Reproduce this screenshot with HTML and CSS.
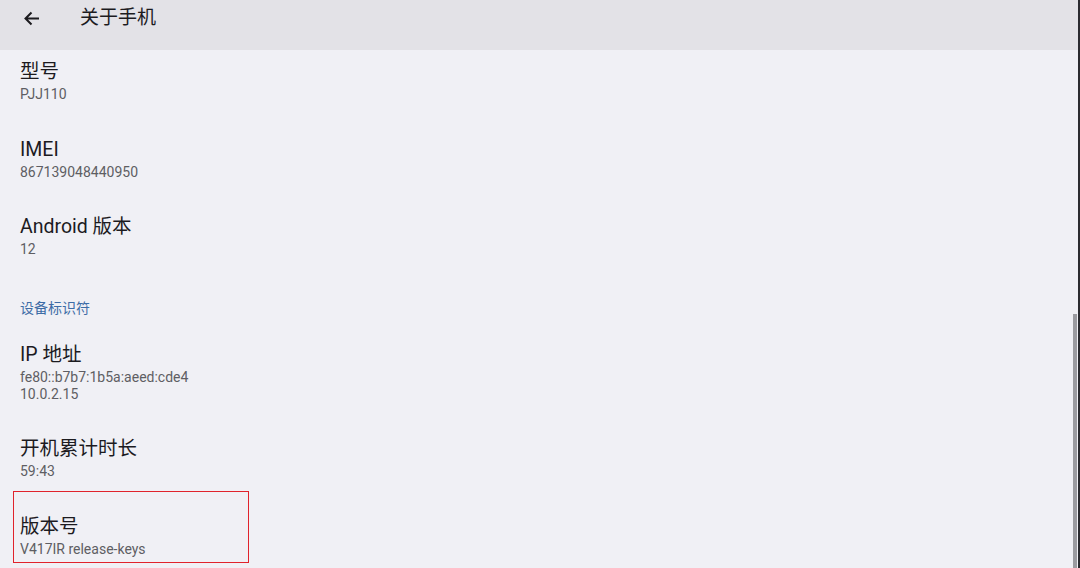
FILE: index.html
```html
<!DOCTYPE html>
<html>
<head>
    <title>关于手机</title>
    <link rel="stylesheet" href="styles.css">
</head>
<body>
    <div class="screen">
        <div class="app">
            <div class="toolbar">
                <span class="back">
                    <svg width="17" height="15" viewBox="0 0 17 15"><path d="M16 7.5H2.5M8.5 1.5l-6 6 6 6" fill="none" stroke="#1c1b1f" stroke-width="2"/></svg>
                </span>
                <span class="toolbar-title">关于手机</span>
            </div>
            <ul class="pref-list">
                <li class="pref first">
                    <div class="pref-title">型号</div>
                    <div class="pref-summary">PJJ110</div>
                </li>
                <li class="pref">
                    <div class="pref-title">IMEI</div>
                    <div class="pref-summary">867139048440950</div>
                </li>
                <li class="pref">
                    <div class="pref-title">Android 版本</div>
                    <div class="pref-summary">12</div>
                </li>
                <li class="category">设备标识符</li>
                <li class="pref">
                    <div class="pref-title">IP 地址</div>
                    <div class="pref-summary">fe80::b7b7:1b5a:aeed:cde4<br>10.0.2.15</div>
                </li>
                <li class="pref">
                    <div class="pref-title">开机累计时长</div>
                    <div class="pref-summary">59:43</div>
                </li>
                <li class="pref">
                    <div class="pref-title">版本号</div>
                    <div class="pref-summary">V417IR release-keys</div>
                    <div class="highlight"></div>
                </li>
            </ul>
            <div class="scrollbar"></div>
        </div>
        <div class="edge"></div>
    </div>
</body>
</html>
```

FILE: styles.css
```css
body {
    margin: 0;
    padding: 0;
    font-family: Roboto, "Noto Sans CJK SC", sans-serif;
    background-color: #f0f0f5;
    overflow: hidden;
}
.screen {
    display: flex;
    width: 1080px;
    height: 568px;
}
.app {
    position: relative;
    flex: 1;
    background-color: #f0f0f5;
    overflow: hidden;
}
.edge {
    width: 2px;
    background-color: #2b2b30;
}
.toolbar {
    display: flex;
    align-items: center;
    height: 50px;
    padding-bottom: 14px;
    box-sizing: border-box;
    background-color: #e3e2e7;
}
.back {
    display: flex;
    margin-left: 23px;
}
.toolbar-title {
    margin-left: 40px;
    font-size: 19px;
    line-height: 24px;
    color: #1c1b1f;
}
.pref-list {
    list-style: none;
    margin: 0;
    padding: 0;
}
.pref {
    position: relative;
    padding: 16px 20px 15.5px;
}
.pref.first {
    padding-top: 7px;
}
.pref-title {
    font-size: 19.5px;
    line-height: 29px;
    color: #1c1b1f;
}
.pref-summary {
    font-size: 14px;
    line-height: 17px;
    color: #5e5e63;
}
.category {
    padding: 24px 20px 6px;
    font-size: 14px;
    line-height: 20px;
    color: #3d6ca6;
}
.highlight {
    position: absolute;
    left: 13px;
    top: -4.5px;
    width: 234px;
    height: 70px;
    border: 1px solid #e0232c;
}
.scrollbar {
    position: absolute;
    right: 1px;
    top: 314px;
    width: 4px;
    height: 254px;
    background-color: #9b9ba0;
}
```
